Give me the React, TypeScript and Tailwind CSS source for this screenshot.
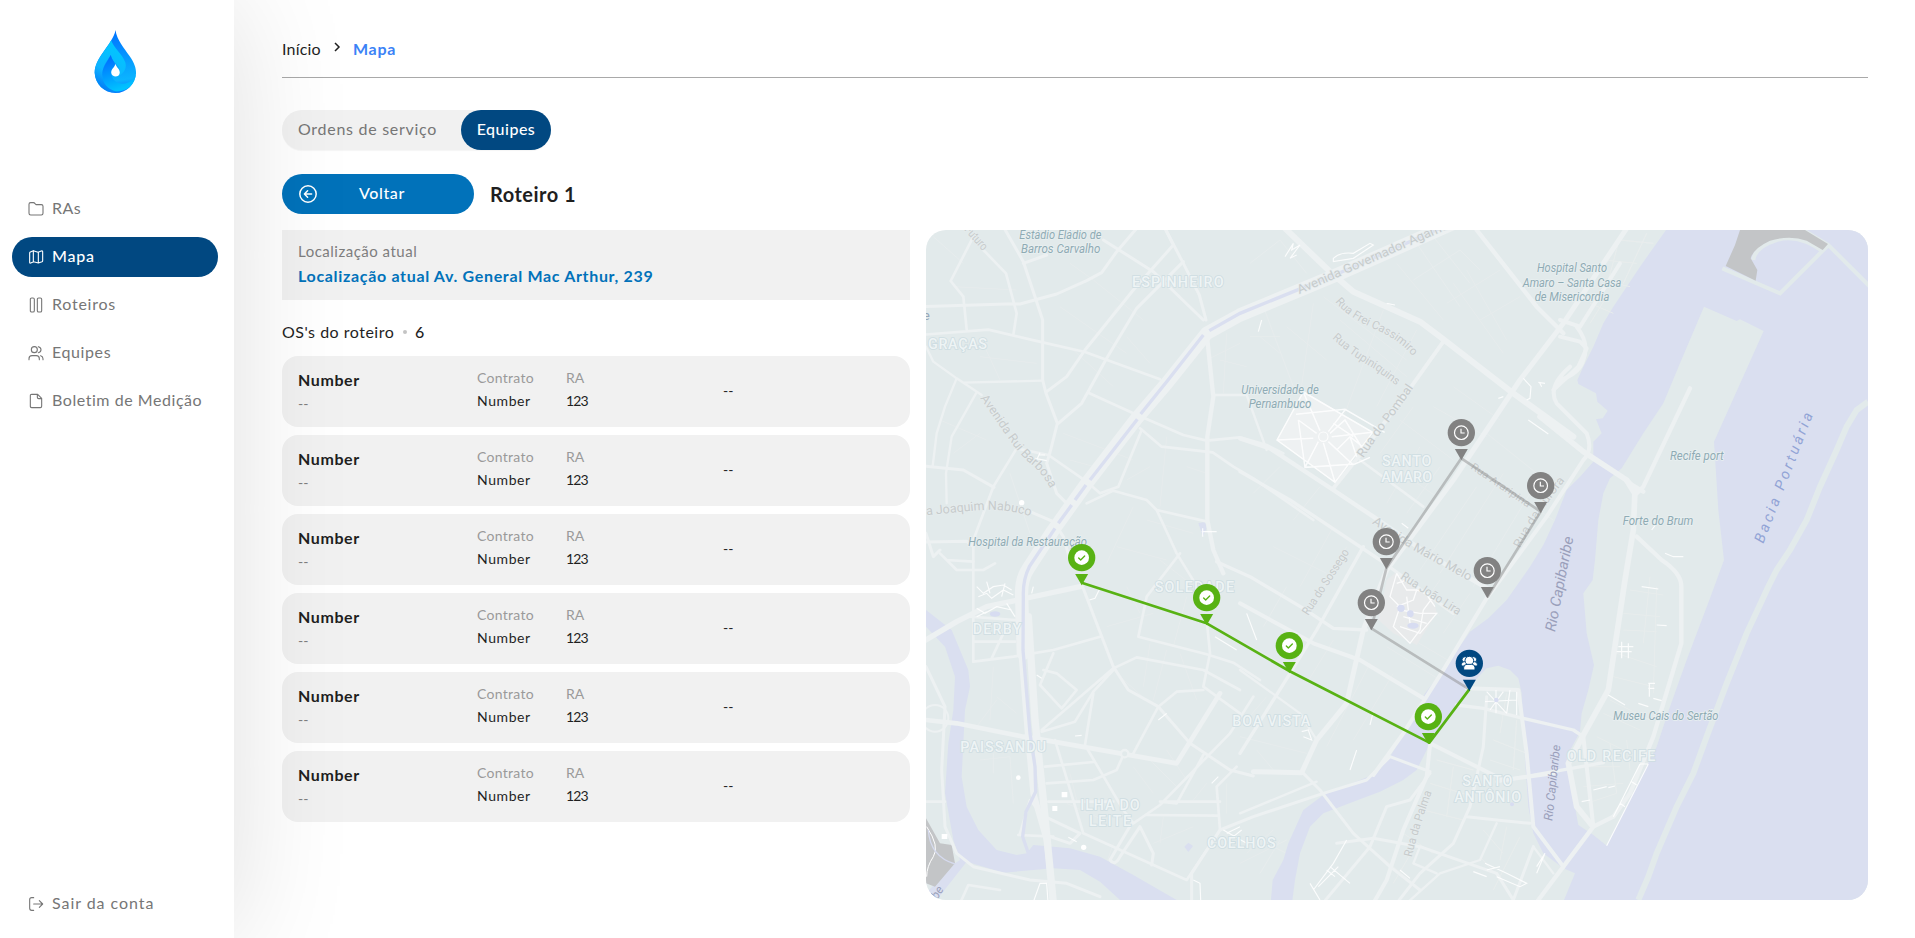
import type { ReactNode } from "react";

type NavItem = { label: string; icon: ReactNode; active?: boolean; spacing: string };

function Glyph({ children }: { children: ReactNode }) {
  return (
    <svg viewBox="0 0 48 48" className="size-4 shrink-0" fill="none" stroke="currentColor" strokeWidth="3.3" strokeLinecap="round" strokeLinejoin="round">
      {children}
    </svg>
  );
}

const navItems: NavItem[] = [
  {
    label: "RAs",
    spacing: "tracking-[0.4px]",
    icon: <Glyph><path d="M3 37V10q0-5 5-5h8q3 0 5 3l3 3h16q5 0 5 5v21q0 5-5 5H8q-5 0-5-5z" /></Glyph>,
  },
  {
    label: "Mapa",
    active: true,
    spacing: "tracking-[0.8px]",
    icon: <Glyph><path d="M5 12q0-2 2-3l9-4 14 5 10-4q4-1 4 2v27q0 2-2 3l-11 4-14-4-9 4q-3 1-3-2zM16 5v33M31 10v32" /></Glyph>,
  },
  {
    label: "Roteiros",
    spacing: "tracking-[0.75px]",
    icon: <Glyph><rect x="7" y="3" width="12" height="42" rx="4" /><rect x="28" y="3" width="13" height="42" rx="4" /></Glyph>,
  },
  {
    label: "Equipes",
    spacing: "tracking-[0.6px]",
    icon: <Glyph><circle cx="19" cy="14" r="9" /><path d="M3 44v-3q0-9 9-9h13q9 0 9 9v3M31 5q8 2 8 9t-8 9M38 32q7 2 7 9v3" /></Glyph>,
  },
  {
    label: "Boletim de Medição",
    spacing: "tracking-[0.55px]",
    icon: <Glyph><path d="M7 8q0-4 4-4h18l12 12v24q0 4-4 4H11q-4 0-4-4zM28 4v9q0 4 4 4h9" /></Glyph>,
  },
];

function Logo() {
  return (
    <svg viewBox="280 86 130 194" className="h-[65px] w-[43px]">
      <defs>
        <linearGradient id="dropA" x1="0.5" y1="0" x2="0.6" y2="1">
          <stop offset="0" stopColor="#0072ff" />
          <stop offset="0.8" stopColor="#0bb4ff" />
          <stop offset="1" stopColor="#0672ff" />
        </linearGradient>
        <linearGradient id="dropB" x1="0.6" y1="0" x2="0.2" y2="1">
          <stop offset="0" stopColor="#00c8ff" />
          <stop offset="0.6" stopColor="#0eb4ff" />
          <stop offset="1" stopColor="#0070f5" />
        </linearGradient>
        <linearGradient id="dropC" x1="0" y1="0" x2="0.3" y2="1">
          <stop offset="0" stopColor="#0062ff" />
          <stop offset="1" stopColor="#00c2ff" />
        </linearGradient>
      </defs>
      <path d="M345 88C349 118 371 143 388 167C401 186 408 203 407 219C404 253 378 278 345 278C310 278 284 252 282 217C281 197 294 174 307 156C324 132 342 109 345 88Z" fill="url(#dropA)" />
      <path d="M332 119C339 142 367 162 375 187C380 209 365 226 347 228C359 220 360 207 354 199C346 187 332 178 331 163C317 183 304 201 305 224C307 250 330 270 361 275C321 285 284 257 282 217C281 183 316 149 332 119Z" fill="url(#dropB)" />
      <path d="M331 163C333 177 346 187 343 194C336 204 330 213 333 221C334 239 350 250 367 250C387 250 404 235 407 216C406 253 379 276 345 273C322 268 305 248 305 224C304 201 320 184 331 163Z" fill="url(#dropC)" />
      <path d="M345 190C347 201 358 205 358 217C356 233 334 232 332 217C332 205 343 201 345 190Z" fill="#fff" />
    </svg>
  );
}

function Sidebar() {
  return (
    <aside className="relative z-10 flex w-[234px] shrink-0 flex-col bg-white px-3 pt-[28.5px] pb-[14px] shadow-[0_0_120px_rgba(0,0,0,0.13)]">
      <div className="flex h-[160.5px] justify-center pr-[4px]">
        <Logo />
      </div>
      <nav className="flex flex-col gap-2">
        {navItems.map((item) => (
          <a
            key={item.label}
            className={`flex h-10 w-[206px] items-center gap-2 rounded-full pl-4 text-base whitespace-nowrap ${item.spacing} ${item.active ? "bg-[#014881] font-medium text-white" : "text-[#767676]"}`}
          >
            {item.icon}
            <span className="pb-[3px]">{item.label}</span>
          </a>
        ))}
      </nav>
      <a className="mt-auto flex h-10 items-center gap-2 pl-4 text-base tracking-[0.95px] text-[#767676]">
        <Glyph><path d="M17 5h-6q-6 0-6 6v26q0 6 6 6h6M17 24h27M34 14l10 10-10 10" /></Glyph>
        <span className="pb-[3px]">Sair da conta</span>
      </a>
    </aside>
  );
}

function OrderCard() {
  return (
    <li className="flex h-[71px] rounded-2xl bg-[#f1f1f1] pl-4 text-[#1f1f1f]">
      <div className="w-[179px] pt-3">
        <p className="text-base leading-6 font-bold tracking-[0.6px]">Number</p>
        <p className="text-sm leading-6 text-[#7e7e7e]">--</p>
      </div>
      <div className="w-[89px] pt-[11px]">
        <p className="text-sm leading-[22px] tracking-[0.3px] text-[#9a9a9a]">Contrato</p>
        <p className="text-sm leading-6 tracking-[0.6px]">Number</p>
      </div>
      <div className="w-[157px] pt-[11px]">
        <p className="text-sm leading-[22px] text-[#9a9a9a]">RA</p>
        <p className="text-sm leading-6 tracking-[-0.9px]">123</p>
      </div>
      <p className="self-center pb-0.5 text-sm">--</p>
    </li>
  );
}

type Road = [string, number];

const majorRoads: Road[] = [
  // north-west
  ["M0 260L260 252L300 252L410 222L500 182L545 158L590 95L650 25", 9],
  ["M250 20L310 125L345 230L368 300L368 480L378 520L412 610L392 690L380 730L410 820L440 850", 9],
  ["M160 50L92 183L130 230L140 328M190 90L258 160L290 280L280 345M0 345L205 329L345 362L495 396L720 478", 8],
  ["M18 380L40 425L110 475L185 525M110 475L75 560L50 640L38 738M130 488L368 482M168 520L95 650L78 760L80 850", 7],
  ["M0 737L130 750L222 802M380 515L440 470L495 390L640 210L760 75L735 25M415 610L485 550L560 415L650 265L790 125", 9],
  ["M310 130L380 105M550 60L700 155L850 300M735 25L790 130L838 225L858 300", 9],
  ["M860 340L880 530L862 650L862 900L880 990L910 1060", 13],
  ["M505 518L640 580L790 645L860 662L960 652L1040 675L1090 700", 8],
  ["M660 625L725 680L878 697L940 740L1000 775L1180 900", 8],
  ["M665 630L595 800L540 820L500 785L385 705L290 685L220 800L160 960L160 1325", 8],
  ["M500 850L580 812L680 840L710 870L862 905M710 870L770 1000L850 1130", 8],
  ["M330 875L400 905L430 950L450 1020M18 966L140 964L160 980M18 940L40 1010L60 990", 9],
  ["M880 525L980 525L1040 690", 7],
  ["M890 1025L990 1070L1150 1165L1240 1225L1340 1230", 10],
  ["M780 1000L680 1130L655 1250L860 1303L940 1328L1020 1380", 8],
  // north
  ["M1090 20L1230 155L1300 215L1500 305L1560 350L1780 520L1960 650", 18],
  ["M1670 30L1850 260L1930 340", 13],
  ["M1570 365L1470 505L1320 705L1240 805", 12],
  ["M960 655L1050 685L1240 810L1360 890L1520 1000L1710 1110", 13],
  ["M960 755L1110 840L1380 1020L1600 1180", 10],
  ["M1320 720L1510 860", 8],
  ["M2120 25L1930 310L1800 480L1660 690L1600 780L1400 1050L1330 1230L1300 1360L1280 1450L1190 1560L1145 1658L1000 1655", 15],
  ["M2100 130L1980 320L1920 300M1920 350L1980 365L2000 385L1975 440L1900 510", 12],
  ["M1970 320Q2010 370 1990 420Q1980 460 1920 480M1950 440Q1880 500 1910 550L2000 640Q2020 690 1990 720L1880 890L1700 1135L1570 1350L1450 1540L1360 1665", 12],
  ["M1330 980L1190 1230L1110 1360L960 1600", 10],
  ["M960 1150L1180 1270L1320 1320L1510 1435", 12],
  // port
  ["M1860 590L1990 695L2120 780L2145 810L2140 930L2115 1080L2065 1410L1990 1545L1945 1630L1970 1760L2015 1815", 17],
  ["M2310 505L2170 800L2145 825L2120 785L2170 815M2150 950L2225 1020Q2285 1060 2284 1100L2284 1270L2200 1550L2130 1720L2080 1790L2020 1820L1930 1940L1840 2060", 13],
  ["M1990 1550L2020 1820M1640 1405L1795 1410L1820 1600L1840 1820L1930 1940", 12],
  ["M1610 1455L1690 1465L1810 1495L1960 1530L1990 1550M1730 1685L1900 1655L2050 1628", 10],
  // south-west
  ["M18 1500L110 1510L310 1550L345 1555L600 1600L770 1630L900 1420", 14],
  ["M0 1270L110 1205L200 1160L480 1100", 16],
  ["M295 1190L305 1310L325 1560L340 1720L380 1860L400 2040", 18],
  ["M325 1190L345 1500L370 1740L400 2050", 22],
  ["M60 1000L110 1050L190 1050L225 1030M80 1020L160 1025M150 1190L285 1200M160 1265L285 1265M160 1325L280 1310L400 1290L540 1250M250 1240L215 1315", 8],
  ["M18 1340L75 1460L65 1650L75 1820L110 1900L160 1940L330 1980L440 1990L540 2030", 9],
  ["M480 1080L580 1340L625 1410L715 1460L810 1570L930 1650L1000 1668", 9],
  ["M400 1300L360 1395L425 1465L470 1410L410 1360L370 1350M365 1530L580 1345L650 1312L850 1350L960 1410M860 1200L870 1300L850 1400L960 1480M365 1535L465 1505L520 1415L580 1350", 8],
  ["M520 1420L495 1575L610 1770L640 1810L720 1755L930 1540L1000 1430M640 1600L715 1460L770 1415L850 1410M850 1605L770 1750L720 1745L900 1745", 8],
  ["M405 1560L490 1840L800 1980L900 1830L890 1700L950 1640M375 1640L520 1626M380 1690L520 1680L590 1650L610 1605M385 1745L580 1745M680 1785L890 1787", 8],
  ["M375 1790L480 1840L450 1870L390 1850M635 1810L570 1920Q585 1940 600 1910L660 1820L700 1900L695 1935M815 2060L815 1960L900 1830L1000 1790L1210 1720L1340 1680L1410 1610L1530 1655", 9],
  ["M300 1840L330 1740L370 1790M295 1845L400 1850M120 2050L145 1995L240 2010M18 1745L75 1745", 8],
  // centre south
  ["M1145 1655L1200 1710L1300 1840L1410 1940L1500 2010M1530 1660L1470 1740L1400 1760L1350 1880L1200 2060", 9],
  ["M1530 1575L1520 1670L1450 1830L1400 1980L1360 2050M1530 1570L1750 1680L1900 1660", 12],
  ["M1700 1430L1690 1580L1650 1760L1600 1870L1500 1960L1430 2050M1640 1790L1730 1800L1830 1810M1840 1880L1780 2040L1730 1960L1500 1880L1360 1855L1250 1870", 9],
  ["M1730 1810L1680 1920L1560 1960L1460 2050M1500 1880L1480 1930L1550 1960M960 1780L1190 1685M960 1350L1140 1480L1190 1560M1840 1880L1900 1960", 7],
];

const minorRoads = [
  "M40 50L130 130M450 130L520 180M520 180L670 300M420 260L620 400M560 310L590 260M180 350L240 480M100 200L290 210M180 410L350 430M460 390L580 500M620 350L690 430M900 420L980 440M920 340L910 520M860 420L960 370M60 600L200 660M100 700L180 640M270 760L330 940M450 720L560 750M430 640L640 720M620 780L690 740M740 650L720 860M800 740L860 760M640 860L560 1030M680 900L820 940M590 980L740 1020",
  "M990 130L1080 60L1160 160M1020 350L1080 400M990 350L1080 350M1030 260L1120 500M1100 320L1220 420M1180 250L1130 600M1210 230L1460 420M1260 300L1460 470M1390 270L1260 620M1490 330L1370 560M1430 130L1570 300M1490 70L1620 260M1540 50L1650 190M1600 190L1750 400M1480 180L1620 90L1680 150M1640 150L1760 360M1580 250L1740 150M1680 300L1800 230M1600 500L1740 600M1540 560L1700 650M1440 600L1600 720M1480 560L1380 700M1390 720L1550 830M1500 680L1400 850M1560 740L1460 880M1700 640L1900 800M1640 730L1900 900M1670 800L1500 1050M1750 760L1560 1060M1830 820L1660 1100",
  "M1000 820L1080 740M1120 900L1200 800M1060 980L1220 1060M1240 920L1140 1100M1280 980L1180 1160M1440 1060L1560 1190M1560 1080L1460 1220M1650 1120L1570 1240M1400 1280L1560 1380M1430 1230L1600 1330M1240 1260L1160 1390M1350 1330L1220 1580M1420 1360L1300 1560M1100 1100L1030 1220M960 1260L1100 1340M720 1020L900 1160M800 1130L760 1280M620 1100L660 1180M560 1220L700 1180M690 1270L670 1400M740 1290L700 1440M780 1300L830 1440M600 1370L690 1450M230 1440L170 1520M230 1430L290 1480M220 1340L210 1500M180 1620L270 1610L280 1750M220 1600L220 1660M640 1640L700 1720M680 1610L770 1700M740 1590L800 1680M860 1690L820 1740M820 1820L700 1870M730 1790L720 1870M450 1660L470 1740M440 1750L550 1800M580 1870L560 1930M920 1690L920 1780M980 1500L1040 1430M960 1550L1160 1600M1010 1590L1060 1650M1000 1850L1120 1910M980 1900L1060 1830M960 1930L1100 1860M1020 1960L1080 1860",
  "M2100 60L2200 70M2050 120L2150 130M2040 180L2130 200M2010 250L2080 280M2100 50L2060 200M2180 40L2110 190M2060 230L2010 310M2130 1110L2230 1125M2110 1180L2220 1190M2110 1230L2210 1235M2090 1300L2210 1340M2080 1370L2200 1400M2190 1070L2170 1270M2210 1100L2200 1420M2050 1480L2160 1530M2070 1440L2190 1500M2030 1550L2150 1610M1980 1640L2100 1640M1990 1700L2110 1690M2000 1750L2090 1720M2070 1570L2090 1720M2120 1560L2130 1650M1760 1420L1740 1540M1790 1500L1780 1650M1720 1560L1820 1600M1710 1620L1800 1650M1550 1620L1660 1650M1530 1690L1660 1730M1510 1770L1630 1800M1600 1640L1580 1790M1690 1830L1750 1900M1680 1910L1760 2000M1760 1820L1740 1920M1800 1850L1720 2010M1490 1870L1420 1990M1370 1900L1480 1990M1450 1840L1540 1900",
];

const brightLines =
  "M360 698L350 720M355 705L375 705M345 715L380 722M303 848h4M890 935h-45M848 925v25M170 1100L190 1120L220 1100L250 1095L275 1110M175 1130L200 1120L215 1135L250 1110L280 1125M200 1085L210 1120M255 1090L245 1130M170 1165L195 1180L230 1160L275 1170M170 1190L200 1175M260 1150L285 1190M350 1365L365 1375M540 1105L525 1135L508 1140M340 1100L335 1120M715 1500L740 1480M465 1548L485 1546M445 1852L470 1865M885 1250L950 1290M875 1690L895 1670M910 1830L980 1870M920 1840L960 1820M940 1850L965 1830M335 2060L360 1990L380 1990L385 2060M820 1980L840 1990L842 2040M1095 110L1120 70L1115 90L1140 75L1110 115L1130 105M1025 300L1015 335M1240 115Q1260 95 1300 100L1350 70L1360 75L1300 115L1240 125ZM1400 250L1425 255M1810 475L1833 500L1830 535L1820 540M1855 487L1875 490M1865 500L1858 487M1735 535L1750 530M1825 600L1885 642M1445 910L1465 925M1010 1260L980 1180M1350 1515L1360 1475M1145 1535L1165 1530L1175 1560L1150 1550M1280 1860L1240 1930L1180 2010M1195 2000L1255 1940M1220 1950L1245 1970M1230 1940L1290 1990M1170 1990L1200 2040M1695 1930L1760 1960L1820 1990L1800 2000L1730 1970M1660 1955L1700 1970M1700 1950L1740 1940M1310 1590L1290 1650M1440 1950L1470 1975M1850 1940L1875 1900L1850 1960M2165 1100L2215 1107M2210 1215L2240 1217M2095 1280h45M2090 1295h45M2105 1265v50M2125 1270v45M2185 1390h20M2185 1405h18M2188 1390v40M2200 1435L2225 1442M2155 1450L2185 1460M2065 1425L2115 1455M2160 1632L2080 1790M2185 1632L2060 1877M2160 1632L2185 1632M2135 1685L2150 1695M2100 1750L2115 1760M1985 1745L2010 1740M2020 1710L2060 1700M2065 1703L2085 1698M2235 1000L2260 1010L2290 1010M2210 910L2195 930";

const pending: [number, number][] = [[1624, 638], [1862, 797], [1399, 965], [1702, 1052], [1354, 1148]];
const done: [number, number][] = [[485, 1013], [860, 1133], [1108, 1277], [1525, 1490]];

function Pin({ x, y, color, children }: { x: number; y: number; color: string; children: ReactNode }) {
  return (
    <g transform={`translate(${x} ${y})`}>
      <circle r="41" fill={color} />
      <path d="M-19.5 49H19.5L0 83Z" fill={color} />
      {children}
    </g>
  );
}

function PlaceLabel({ x, y, width, children }: { x: number; y: number; width: number; children: string }) {
  return (
    <text x={x} y={y} textLength={width} lengthAdjust="spacingAndGlyphs" fontSize="36" fontStyle="italic" fill="#8fabb4" stroke="#e9f0f1" strokeWidth="5" paintOrder="stroke">
      {children}
    </text>
  );
}

function DistrictLabel({ x, y, width, children }: { x: number; y: number; width: number; children: string }) {
  return (
    <text x={x} y={y} textLength={width} fontSize="43" fontWeight="500" fill="#eef4f5" stroke="#cedde2" strokeWidth="5" paintOrder="stroke">
      {children}
    </text>
  );
}

const streetLabels: { id: string; d: string; text: string; size: number; width: number }[] = [
  { id: "st1", d: "M105 0L190 95", text: "do Futuro", size: 36, width: 125 },
  { id: "st2", d: "M180 535C230 600 280 690 330 730Q370 760 395 815", text: "Avenida Rui Barbosa", size: 37, width: 345 },
  { id: "st3", d: "M-24 890Q60 882 160 872T350 895", text: "Rua Joaquim Nabuco", size: 38, width: 358 },
  { id: "st4", d: "M1138 222L1390 112L1680 -16", text: "Avenida Governador Agamenon", size: 37, width: 556 },
  { id: "st5", d: "M1245 245Q1280 290 1360 325T1480 410", text: "Rua Frei Cassimiro", size: 35, width: 288 },
  { id: "st6", d: "M1236 355Q1290 405 1360 445L1435 500", text: "Rua Tupiniquins", size: 35, width: 240 },
  { id: "st7", d: "M1330 715Q1380 640 1420 590L1490 490", text: "Rua do Pombal", size: 37, width: 260 },
  { id: "st8", d: "M1355 910L1470 985L1660 1090", text: "Avenida Mário Melo", size: 37, width: 340 },
  { id: "st9", d: "M1650 745L1840 875", text: "Rua Araripina", size: 31, width: 210 },
  { id: "st10", d: "M1800 985Q1840 900 1940 775", text: "Rua da Aurora", size: 35, width: 245 },
  { id: "st11", d: "M1165 1188L1290 995", text: "Rua do Sossego", size: 36, width: 228 },
  { id: "st12", d: "M1440 1075L1620 1190", text: "Rua João Lira", size: 36, width: 206 },
  { id: "st13", d: "M1475 1912Q1500 1810 1542 1700", text: "Rua da Palma", size: 36, width: 205 },
];

function CityMap() {
  return (
    <svg viewBox="18 30 2826 2010" className="block h-full w-full font-['Roboto',sans-serif]" preserveAspectRatio="none">
      <rect x="18" y="30" width="2826" height="2010" fill="#e2eaeb" />
      <g fill="none" stroke="#e7eced" strokeWidth="3">
        {minorRoads.map((d) => <path key={d} d={d} />)}
      </g>
      <g fill="#dadff0">
        <path d="M2238 30L2160 140L2080 260L2050 310L2020 380L1990 440L1972 480L1975 492L2028 520L2032 545L2063 572L2048 595L2028 598L2045 640L2020 665L2020 725L1980 770L1940 810L1905 900L1870 975L1830 1040L1760 1140L1705 1195L1650 1235L1570 1350L1515 1420L1470 1515L1440 1560L1410 1610L1370 1660L1210 1725L1150 1770L1105 1870L1090 1920L1058 1980L1052 2050H1116L1125 1980L1140 1900L1170 1820L1210 1780L1300 1745L1380 1715L1450 1680L1490 1650L1525 1580L1600 1480L1648 1408L1675 1370L1700 1345L1735 1337L1770 1350L1795 1375L1805 1420L1815 1620L1825 1760L1840 1840L1870 1900L1930 1945L1965 1960L1932 2040H2844V30Z" />
        <path d="M18 1170L95 1230L145 1350L150 1400L135 1470L125 1670L140 1760L175 1830L230 1890L290 1905L320 1900L340 1875L450 1885L540 1910L640 1965L770 2040H600L540 1985L480 1950L400 1945L250 1958L140 1925L50 2040H18V2020L105 1930L120 1920L100 1860L75 1720L85 1570L100 1470L105 1370L75 1280L18 1220Z" />
        <path d="M793 1880l12-12 14 10-14 18zM835 910l20-5 5 20-12 25-6-20z" />
      </g>
      <path d="M18 1795L60 1870L95 1875L105 1930L45 2000L18 1990Z" fill="#c3c5c7" />
      <path d="M20 1820Q60 1880 40 1910T20 1970" fill="none" stroke="#fff" strokeWidth="3" />
      <path d="M25 1830Q30 1910 105 1932" fill="none" stroke="#d5daee" strokeWidth="4" />
      <g stroke="#e2eaeb" fill="none" strokeWidth="12">
        <path d="M2407 145L2580 220L2725 75M2650 30L2725 75L2850 200M2500 120Q2505 80 2570 60T2710 95" />
        <path d="M2844 545L2810 570L2780 620L2750 690L2700 800L2660 900L2610 990L2570 1050L2545 1100L2480 1240L2420 1390L2360 1550L2320 1660L2270 1760L2210 1900L2185 1970L2155 2040" strokeWidth="18" />
      </g>
      <path d="M2460 30L2445 75L2417 138L2507 182L2512 150L2492 115Q2500 85 2550 62Q2610 45 2660 62L2708 90L2724 72L2655 30Z" fill="#c3c5c7" />
      <path d="M2352 260L2450 303L2460 298L2531 333L2382 665L2395 870L2412 1020L2370 1135L2300 1320L2250 1460L2210 1580L2060 1877L2020 1845L1975 1815L1965 1760L1942 1640L1940 1610L1980 1535L1985 1480L2005 1410L2022 1335L2000 1240L1990 1120L2018 1080L2025 1020L2035 900L2050 820L2070 775L2105 745L2170 640L2230 550L2280 430Z" fill="#e2eaeb" />
      <g fill="none" stroke="#e8eded" strokeWidth="3">
        <path d={minorRoads[3]} />
      </g>
      <path d="M1150 512L1358 637L1245 790L1070 660Z" fill="#eef1f2" />
      <path d="M1400 1080L1430 1055L1540 1130L1550 1180L1490 1275L1420 1240L1375 1200Z" fill="#e8eaeb" />
      <g fill="none" stroke="#edf1f2" strokeLinejoin="round" strokeLinecap="round">
        {majorRoads.map(([d, w]) => <path key={d} d={d} strokeWidth={w} />)}
        <path d="M1600 10L1260 160L960 285L860 340L740 490L650 595L500 790L400 930L325 1045Q302 1080 305 1130L310 1300" strokeWidth="40" />
        <circle cx="614" cy="1601" r="11" fill="#e2eaeb" strokeWidth="7" />
        <circle cx="45" cy="1495" r="40" strokeWidth="6" />
      </g>
      <g fill="none" stroke="#dadff0" strokeWidth="10">
        <path d="M1560 25L1260 158L960 280L868 332M850 345L740 485L662 582M652 598L510 780M498 795L465 840M455 855L415 910M405 925L328 1040Q308 1080 310 1130L309 1290L330 1540L345 1640L347 1715L318 1775L308 1850L325 1900" />
      </g>
      <g fill="none" stroke="#fff" strokeWidth="3.5" opacity="0.85">
        <path d={brightLines} />
        <path d="M1150 516L1358 637L1245 787L1071 660ZM1128 583L1275 568L1394 637M1135 600L1155 742L1305 732L1350 712M1071 660L1180 655M1235 650L1358 637M1150 516L1200 632M1275 570L1225 635M1225 665L1300 735M1195 665L1155 742M1135 600L1190 640M1210 668L1245 787M1230 640L1275 600L1330 690M1240 610L1300 650M1250 690L1290 650L1340 690M1290 650L1310 710" strokeWidth="4.5" />
        <circle cx="1210" cy="650" r="14" />
        <path d="M1430 1060L1410 1130L1440 1160L1420 1220L1470 1270L1500 1230L1510 1170L1540 1130L1490 1110L1480 1140L1430 1160M1430 1060L1460 1110L1490 1110M1440 1170L1500 1180L1550 1180L1500 1240L1440 1220M1460 1130L1470 1210M1510 1110L1545 1160M1430 1090L1460 1080M1450 1190L1520 1210" strokeWidth="4" />
        <path d="M1700 1415L1760 1480M1750 1415L1710 1470M1695 1445L1790 1440M1728 1410V1480M1770 1410L1760 1480M1790 1415V1485" />
      </g>
      <g fill="#fff">
        <circle cx="305" cy="848" r="8" /><circle cx="295" cy="1673" r="7" /><circle cx="491" cy="1882" r="8" />
        <path d="M425 1716h17v16h-17zM397 1758h15v15h-15zM65 1842h17v15h-17z" />
      </g>
      <g fill="#d7dcf1">
        <circle cx="1443" cy="1165" r="11" /><circle cx="1471" cy="1181" r="10" /><ellipse cx="1479" cy="1217" rx="17" ry="9" /><circle cx="1729" cy="1440" r="7" />
        <ellipse cx="225" cy="1182" rx="16" ry="8" /><circle cx="1776" cy="1753" r="6" />
      </g>

      <g fill="#c6cbcc" stroke="#e7edee" strokeWidth="4" paintOrder="stroke">
        {streetLabels.map((label) => (
          <g key={label.id}>
            <path id={label.id} d={label.d} fill="none" stroke="none" />
            <text fontSize={label.size}>
              <textPath href={`#${label.id}`} textLength={label.width} lengthAdjust="spacingAndGlyphs">{label.text}</textPath>
            </text>
          </g>
        ))}
      </g>

      <PlaceLabel x={298} y={56} width={246}>Estádio Eládio de</PlaceLabel>
      <PlaceLabel x={303} y={98} width={238}>Barros Carvalho</PlaceLabel>
      <PlaceLabel x={964} y={521} width={232}>Universidade de</PlaceLabel>
      <PlaceLabel x={986} y={564} width={188}>Pernambuco</PlaceLabel>
      <PlaceLabel x={145} y={979} width={356}>Hospital da Restauração</PlaceLabel>
      <PlaceLabel x={1851} y={157} width={210}>Hospital Santo</PlaceLabel>
      <PlaceLabel x={1808} y={200} width={296}>Amaro – Santa Casa</PlaceLabel>
      <PlaceLabel x={1844} y={243} width={224}>de Misericordia</PlaceLabel>
      <PlaceLabel x={2250} y={720} width={161}>Recife port</PlaceLabel>
      <PlaceLabel x={2108} y={915} width={212}>Forte do Brum</PlaceLabel>
      <PlaceLabel x={2080} y={1500} width={315}>Museu Cais do Sertão</PlaceLabel>

      <DistrictLabel x={636} y={200} width={275}>ESPINHEIRO</DistrictLabel>
      <DistrictLabel x={24} y={387} width={177}>GRAÇAS</DistrictLabel>
      <DistrictLabel x={1386} y={738} width={148}>SANTO</DistrictLabel>
      <DistrictLabel x={1384} y={786} width={152}>AMARO</DistrictLabel>
      <DistrictLabel x={704} y={1115} width={238}>SOLEDADE</DistrictLabel>
      <DistrictLabel x={158} y={1242} width={146}>DERBY</DistrictLabel>
      <DistrictLabel x={121} y={1595} width={257}>PAISSANDU</DistrictLabel>
      <DistrictLabel x={481} y={1771} width={178}>ILHA DO</DistrictLabel>
      <DistrictLabel x={507} y={1819} width={126}>LEITE</DistrictLabel>
      <DistrictLabel x={861} y={1884} width={206}>COELHOS</DistrictLabel>
      <DistrictLabel x={937} y={1519} width={234}>BOA VISTA</DistrictLabel>
      <DistrictLabel x={1627} y={1699} width={150}>SANTO</DistrictLabel>
      <DistrictLabel x={1603} y={1747} width={200}>ANTÔNIO</DistrictLabel>
      <DistrictLabel x={1940} y={1623} width={266}>OLD RECIFE</DistrictLabel>

      <g fill="#9a9fbb" fontStyle="italic">
        <text transform="translate(1905 1237) rotate(-79)" textLength="290" lengthAdjust="spacingAndGlyphs" fontSize="44">Rio Capibaribe</text>
        <text transform="translate(1897 1803) rotate(-84)" textLength="228" lengthAdjust="spacingAndGlyphs" fontSize="37">Rio Capibaribe</text>
        <text transform="translate(2530 972) rotate(-69)" textLength="415" fontSize="44" fill="#92a4d6">Bacia Portuária</text>
        <text transform="translate(72 2008) rotate(-58)" textAnchor="end" fontSize="36">Capibaribe</text>
        <text x="8" y="301" fontSize="40" fontStyle="normal" fill="#97a7b8">e</text>
      </g>

      <g fill="none" strokeWidth="8" strokeLinejoin="round">
        <path d="M1648 1408L1354 1225L1399 1045L1624 715L1862 875L1702 1132" stroke="#858585" strokeOpacity="0.45" />
        <path d="M485 1088L860 1210L1108 1353L1528 1568L1648 1408" stroke="#58b214" />
      </g>
      {pending.map(([x, y]) => (
        <Pin key={`${x}-${y}`} x={x} y={y} color="#828282">
          <circle r="20.5" fill="none" stroke="#fff" strokeWidth="3.5" />
          <path d="M-1 -12V1H10" fill="none" stroke="#fff" strokeWidth="3.5" />
        </Pin>
      ))}
      {done.map(([x, y]) => (
        <Pin key={`${x}-${y}`} x={x} y={y} color="#58b214">
          <circle r="22" fill="#fff" />
          <path d="M-9 1L-3 7L9 -5" fill="none" stroke="#58b214" strokeWidth="4" strokeLinecap="round" strokeLinejoin="round" />
        </Pin>
      ))}
      <Pin x={1648} y={1330} color="#014881">
        <g fill="#fff" stroke="#014881" strokeWidth="3">
          <circle cx="-13" cy="-11" r="9" /><circle cx="13" cy="-11" r="9" />
          <path d="M-24 8V3Q-24 -5 -15 -5H15Q24 -5 24 3V8Z" />
          <circle cx="0" cy="-8" r="13" />
          <path d="M-17 20V13Q-17 3 -7 3H7Q17 3 17 13V20Z" />
        </g>
      </Pin>
    </svg>
  );
}

export default function App() {
  return (
    <div className="flex h-screen overflow-hidden bg-white font-['Lato','Liberation_Sans',sans-serif] text-[#1f1f1f]">
      <Sidebar />
      <main className="min-w-0 flex-1 pr-[47px] pl-12">
        <header className="flex h-[78px] items-center border-b border-[#a9a9a9] pt-5 text-base">
          <span className="w-[51px] tracking-[0.2px]">Início</span>
          <svg viewBox="0 0 8 12" className="mb-1 h-3 w-2" fill="none" stroke="#1f1f1f" strokeWidth="1.5">
            <path d="M2 2L6 6L2 10" />
          </svg>
          <span className="ml-3 font-bold tracking-[0.7px] text-[#3b82f6]">Mapa</span>
        </header>

        <div className="mt-8 flex h-10 w-[269px] items-center justify-between rounded-full bg-[#f1f1f1] pl-4 text-base shadow-[0_1px_1px_rgba(0,0,0,0.04)]">
          <span className="pb-[3px] tracking-[0.72px] text-[#767676]">Ordens de serviço</span>
          <span className="flex h-10 w-[90px] items-center justify-center rounded-full bg-[#014881] pb-[3px] font-medium tracking-[0.5px] text-white">Equipes</span>
        </div>

        <div className="mt-6 flex h-10 items-center gap-4">
          <button className="flex h-10 w-48 items-center rounded-full bg-[#0172ba] pl-[17px] text-base font-medium text-white">
            <svg viewBox="0 0 18 18" className="size-[18px]" fill="none" stroke="currentColor" strokeWidth="1.5" strokeLinecap="round" strokeLinejoin="round">
              <circle cx="9" cy="9" r="8.2" />
              <path d="M12.6 9H5.6M8.6 5.8L5.4 9L8.6 12.2" />
            </svg>
            <span className="ml-[42px] pb-[3px] tracking-[0.6px]">Voltar</span>
          </button>
          <h1 className="pb-px text-xl font-bold tracking-[0.5px]">Roteiro 1</h1>
        </div>

        <div className="mt-4 flex gap-4">
          <section className="w-[628px] shrink-0">
            <div className="h-[70px] bg-[#f1f1f1] px-4 pt-[9px]">
              <p className="text-[15px] leading-6 tracking-[0.5px] text-[#7e7e7e]">Localização atual</p>
              <p className="text-base leading-[25px] font-bold tracking-[0.67px] text-[#0172ba]">Localização atual Av. General Mac Arthur, 239</p>
            </div>
            <div className="mt-5 mb-3 flex h-6 items-center text-base">
              <h2 className="w-[121px] tracking-[0.5px]">OS's do roteiro</h2>
              <span className="mr-2 size-1 rounded-full bg-[#c4c4c4]" />
              <span className="font-medium">6</span>
            </div>
            <ul className="flex flex-col gap-2">
              {[1, 2, 3, 4, 5, 6].map((n) => <OrderCard key={n} />)}
            </ul>
          </section>
          <section className="h-[670px] min-w-0 flex-1 overflow-hidden rounded-[20px]">
            <CityMap />
          </section>
        </div>
      </main>
    </div>
  );
}
